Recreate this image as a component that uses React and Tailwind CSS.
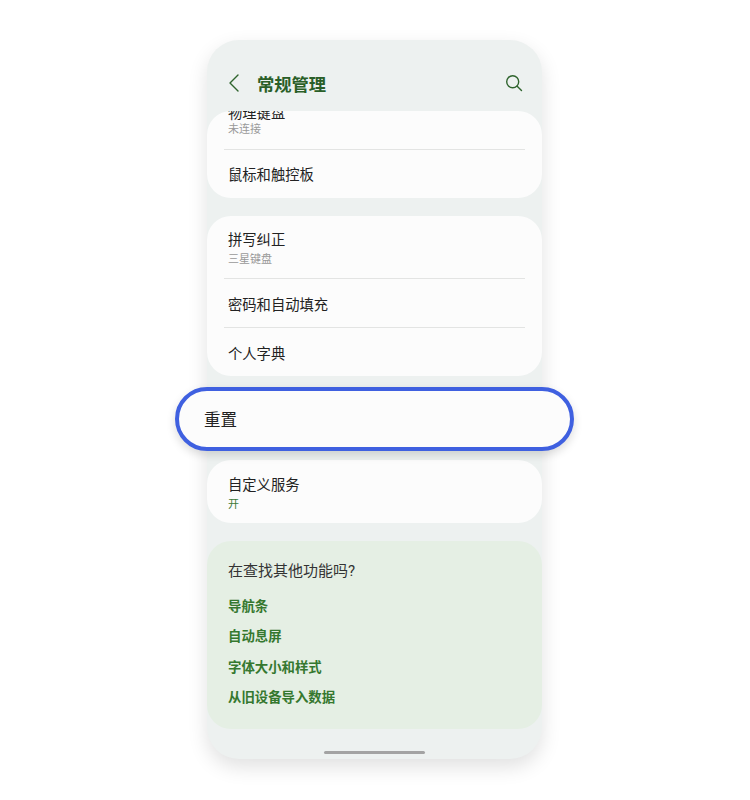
import React from "react";

const FONT = "font-['Roboto','Noto_Sans_CJK_SC',sans-serif]";

function Divider() {
  return <div className="mx-[17px] h-px bg-[#e3e4e3]" />;
}

export default function App() {
  return (
    <div className={`relative w-[750px] h-[800px] bg-white pt-10 ${FONT}`}>
      <div className="ml-[207px] flex h-[719px] w-[335px] flex-col overflow-hidden rounded-[32px] bg-[#edf1f0] shadow-[0_8px_20px_rgba(0,0,0,0.12)]">
        <header className="flex h-[71px] shrink-0 items-center pl-[20px] pr-[19px] pt-[17px]">
          <svg width="14" height="20" viewBox="0 0 14 20" fill="none" stroke="#2f642d" strokeWidth="1.4" strokeLinecap="round" strokeLinejoin="round" className="-mt-[2px]">
            <path d="M11 2 L3 10 L11 18" />
          </svg>
          <h1 className="ml-[16px] mt-[2px] text-[17.3px] leading-6 font-bold text-[#2a5f28]">常规管理</h1>
          <svg className="ml-auto -mt-[2px]" width="18" height="18" viewBox="0 0 18 18" fill="none" stroke="#2f642d" strokeWidth="1.4" strokeLinecap="round">
            <circle cx="7.7" cy="7.7" r="6" />
            <path d="M12.2 12.2 L16.5 16.5" />
          </svg>
        </header>

        <section className="h-[87px] shrink-0 overflow-hidden rounded-[24px] bg-[#fcfcfc]">
          <div className="-mt-[7px] h-[45px] px-[21px]">
            <p className="text-[14.3px] leading-[18px] text-[#222]">物理键盘</p>
            <p className="mt-[1px] text-[11px] leading-[14px] text-[#999]">未连接</p>
          </div>
          <Divider />
          <p className="px-[21px] pt-[16px] text-[14.3px] leading-[18px] text-[#222]">鼠标和触控板</p>
        </section>

        <section className="mt-[18px] h-[160px] shrink-0 rounded-[24px] bg-[#fcfcfc]">
          <div className="h-[62px] px-[21px] pt-[15px]">
            <p className="text-[14.3px] leading-[18px] text-[#222]">拼写纠正</p>
            <p className="mt-[4px] text-[11px] leading-[14px] text-[#999]">三星键盘</p>
          </div>
          <Divider />
          <p className="h-[48px] px-[21px] pt-[16.5px] text-[14.3px] leading-[18px] text-[#222]">密码和自动填充</p>
          <Divider />
          <p className="px-[21px] pt-[16.5px] text-[14.3px] leading-[18px] text-[#222]">个人字典</p>
        </section>

        <section className="mt-[84px] h-[63px] shrink-0 rounded-[24px] bg-[#fcfcfc] px-[21px] pt-[16px]">
          <p className="text-[14.3px] leading-[18px] text-[#222]">自定义服务</p>
          <p className="mt-[4px] text-[11px] leading-[14px] text-[#3d7a38]">开</p>
        </section>

        <section className="mt-[18px] h-[188px] shrink-0 rounded-[24px] bg-[#e5efe4] px-[21px] pt-[20px]">
          <p className="text-[15px] leading-5 text-[#333]">在查找其他功能吗?</p>
          <ul className="mt-[17px] flex flex-col gap-[12.3px] text-[13.4px] leading-[18px] font-bold text-[#35782f]">
            <li>导航条</li>
            <li>自动息屏</li>
            <li>字体大小和样式</li>
            <li>从旧设备导入数据</li>
          </ul>
        </section>

        <div className="mx-auto mt-[22px] h-[3px] w-[101px] shrink-0 rounded-full bg-[#a3a3a3]" />
      </div>

      <div className="absolute left-[175px] top-[387px] flex h-[64px] w-[399px] items-center rounded-full border-4 border-[#3f60e0] bg-[#fcfcfc] pl-[25px] pt-[5px] text-[16.5px] text-[#222] shadow-[0_4px_10px_rgba(0,0,0,0.14)]">
        重置
      </div>
    </div>
  );
}
